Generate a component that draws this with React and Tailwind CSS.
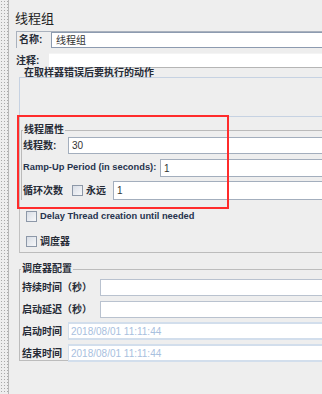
import React from 'react';

const font = 'font-["Liberation_Sans","Noto_Sans_CJK_SC",sans-serif]';

// plain editable text field
const Field = ({ value, className = 'border-[#a3aebd]' }) => (
  <div className={`flex-1 min-w-0 self-stretch bg-white border-y border-l pl-[3px] flex items-center text-[10px] text-[#333] ${className}`}>
    {value}
  </div>
);

// disabled scheduler field
const DimField = ({ value }) => (
  <div className="flex-1 min-w-0 self-stretch bg-white border-y-2 border-l border-[#d2deec] pl-[2px] flex items-center text-[10px] text-[#a8c0de]">
    {value}
  </div>
);

const Check = () => (
  <span className="w-[11px] h-[11px] shrink-0 border border-[#8d98a8] bg-gradient-to-br from-[#d9dee6] to-[#f7f8fa]" />
);

const Label = ({ children, className = '' }) => (
  <span className={`shrink-0 font-bold text-[10px] text-[#262b36] whitespace-nowrap ${className}`}>{children}</span>
);

const LatinLabel = ({ children, className = '' }) => (
  <span className={`shrink-0 font-bold text-[9.3px] text-[#26334d] whitespace-nowrap ${className}`}>{children}</span>
);

export default function App() {
  return (
    <div className={`relative w-[322px] h-[394px] overflow-hidden bg-[#eeeeee] flex ${font}`}>
      {/* splitter strip */}
      <div className="w-[9px] shrink-0 border-r border-[#b8b8b8] bg-[radial-gradient(circle,#a9a9a9_0.7px,transparent_1px)] bg-size-[3px_3px]" />

      <div className="flex-1 min-w-0">
        {/* title */}
        <div className="h-[31px] pt-[11px] pl-[6px] text-[13px] leading-[15px] text-[#222]">线程组</div>

        {/* name */}
        <div className="ml-[7px] h-[17px] flex border-l border-t border-[#a9b1bd]">
          <Label className="w-[34px] pl-[2px] leading-[16px]">名称:</Label>
          <Field value="线程组" className="pl-[4px] border-[#8d9bb0]" />
        </div>

        {/* comment */}
        <div className="ml-[7px] mt-[5px] h-[15px] flex">
          <Label className="w-[33px] leading-[15px]">注释:</Label>
          <div className="flex-1 h-[15px] bg-white border-t border-t-[#f4f4f4] border-b border-b-[#b5b5b5]" />
        </div>

        {/* action after sampler error */}
        <div className="ml-[10px] mt-[1px] h-[8px] pl-[5px] text-[10px] leading-[8px] font-bold text-[#262b36] whitespace-nowrap">在取样器错误后要执行的动作</div>
        <div className="ml-[10px] h-[39px] border-l border-t border-[#c6d2e2]" />

        {/* thread group panel */}
        <div className="ml-[10px] h-[137px] border-l border-t border-b border-t-[#c6d2e2] border-l-[#c2c2c2] border-b-[#bcbcbc]">
          <fieldset className="ml-[1px] mt-[8px] border-t border-l border-[#bababa]">
            <legend className="ml-[1px] px-[1px] text-[10px] leading-[10px] font-bold text-[#262b36]">线程属性</legend>
            <div className="mt-[2px] h-[17px] flex items-center">
              <Label className="w-[46px] pl-[1px]">线程数:</Label>
              <Field value="30" />
            </div>
            <div className="mt-[5px] h-[18px] flex items-center">
              <LatinLabel className="w-[138px] pl-[1px]">Ramp-Up Period (in seconds):</LatinLabel>
              <Field value="1" />
            </div>
            <div className="mt-[4px] h-[19px] flex items-center">
              <Label className="w-[50px] pl-[1px]">循环次数</Label>
              <Check />
              <Label className="ml-[3px] w-[27px]">永远</Label>
              <Field value="1" />
            </div>
          </fieldset>

          <div className="mt-[11px] ml-[6px] h-[11px] flex items-center gap-[3px]">
            <Check />
            <LatinLabel>Delay Thread creation until needed</LatinLabel>
          </div>
          <div className="mt-[14px] ml-[6px] h-[11px] flex items-center gap-[3px]">
            <Check />
            <Label>调度器</Label>
          </div>
        </div>

        {/* scheduler config */}
        <fieldset className="ml-[10px] mt-[11px] h-[97px] border-t border-l border-b border-[#bcbcbc]">
          <legend className="ml-[1px] px-[1px] text-[10px] leading-[10px] font-bold text-[#262b36]">调度器配置</legend>
          <div className="mt-[5px] h-[17px] flex items-center">
            <Label className="w-[80px] pl-[2px]">持续时间（秒）</Label>
            <Field value="" className="border-[#b9c2cf]" />
          </div>
          <div className="mt-[5px] h-[17px] flex items-center">
            <Label className="w-[80px] pl-[2px]">启动延迟（秒）</Label>
            <Field value="" className="border-[#b9c2cf]" />
          </div>
          <div className="mt-[4px] h-[18px] flex items-center">
            <Label className="w-[48px] pl-[2px]">启动时间</Label>
            <DimField value="2018/08/01 11:11:44" />
          </div>
          <div className="mt-[4px] h-[18px] flex items-center">
            <Label className="w-[48px] pl-[2px]">结束时间</Label>
            <DimField value="2018/08/01 11:11:44" />
          </div>
        </fieldset>
      </div>

      {/* red highlight annotation */}
      <div className="absolute left-[17px] top-[115px] w-[212px] h-[94px] border-2 border-[#ff2b2b] pointer-events-none" />
    </div>
  );
}
